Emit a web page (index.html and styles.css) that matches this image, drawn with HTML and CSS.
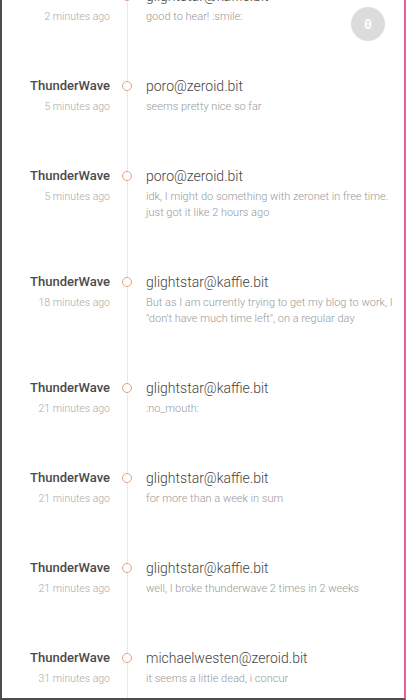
FILE: index.html
```html
<!DOCTYPE html>
<html>
<head>
<meta charset="utf-8">
<link rel="stylesheet" href="styles.css">
</head>
<body>
<div class="frame">
  <div class="feed">
    <div class="item">
      <div class="meta"><div class="name">ThunderWave</div><div class="time">2 minutes ago</div></div>
      <div class="rail"><span class="dot"></span></div>
      <div class="body"><div class="title">glightstar@kaffie.bit</div><div class="msg">good to hear! :smile:</div></div>
    </div>
    <div class="item">
      <div class="meta"><div class="name">ThunderWave</div><div class="time">5 minutes ago</div></div>
      <div class="rail"><span class="dot"></span></div>
      <div class="body"><div class="title">poro@zeroid.bit</div><div class="msg">seems pretty nice so far</div></div>
    </div>
    <div class="item">
      <div class="meta"><div class="name">ThunderWave</div><div class="time">5 minutes ago</div></div>
      <div class="rail"><span class="dot"></span></div>
      <div class="body"><div class="title">poro@zeroid.bit</div><div class="msg">idk, I might do something with zeronet in free time.<br>just got it like 2 hours ago</div></div>
    </div>
    <div class="item">
      <div class="meta"><div class="name">ThunderWave</div><div class="time">18 minutes ago</div></div>
      <div class="rail"><span class="dot"></span></div>
      <div class="body"><div class="title">glightstar@kaffie.bit</div><div class="msg">But as I am currently trying to get my blog to work, I<br>"don't have much time left", on a regular day</div></div>
    </div>
    <div class="item">
      <div class="meta"><div class="name">ThunderWave</div><div class="time">21 minutes ago</div></div>
      <div class="rail"><span class="dot"></span></div>
      <div class="body"><div class="title">glightstar@kaffie.bit</div><div class="msg">:no_mouth:</div></div>
    </div>
    <div class="item">
      <div class="meta"><div class="name">ThunderWave</div><div class="time">21 minutes ago</div></div>
      <div class="rail"><span class="dot"></span></div>
      <div class="body"><div class="title">glightstar@kaffie.bit</div><div class="msg">for more than a week in sum</div></div>
    </div>
    <div class="item">
      <div class="meta"><div class="name">ThunderWave</div><div class="time">21 minutes ago</div></div>
      <div class="rail"><span class="dot"></span></div>
      <div class="body"><div class="title">glightstar@kaffie.bit</div><div class="msg">well, I broke thunderwave 2 times in 2 weeks</div></div>
    </div>
    <div class="item">
      <div class="meta"><div class="name">ThunderWave</div><div class="time">31 minutes ago</div></div>
      <div class="rail"><span class="dot"></span></div>
      <div class="body"><div class="title">michaelwesten@zeroid.bit</div><div class="msg">it seems a little dead, i concur</div></div>
    </div>
  </div>
  <div class="badge">0</div>
</div>
</body>
</html>
```
FILE: styles.css
```css
html, body {
  margin: 0;
  padding: 0;
  background: #ffffff;
}
body {
  font-family: Roboto, "Liberation Sans", sans-serif;
}
.frame {
  position: relative;
  box-sizing: border-box;
  width: 406px;
  height: 700px;
  border-left: 2px solid #4d4d4d;
  border-right: 2px solid #e5609a;
  border-bottom: 2px solid #4d4d4d;
  overflow: hidden;
  background: #fff;
}
.feed {
  margin-top: -14px;
}
.item {
  display: grid;
  grid-template-columns: 108px 34px 1fr;
  padding-bottom: 51px;
  background: linear-gradient(#ece6e6, #ece6e6) 125px 0 / 1px 100% no-repeat;
}
.meta {
  text-align: right;
}
.name {
  font-size: 13px;
  font-weight: 500;
  color: #4a4a4a;
  line-height: 20px;
}
.time {
  font-size: 10.5px;
  font-weight: 300;
  color: #aaa;
  line-height: 16px;
  margin-top: 3px;
}
.rail {
  display: flex;
  justify-content: center;
  align-items: flex-start;
  padding-top: 5px;
}
.dot {
  box-sizing: border-box;
  width: 10px;
  height: 10px;
  border-radius: 50%;
  border: 1.5px solid #e6a07f;
  background: #fff;
}
.body {
  padding-left: 2px;
}
.title {
  font-size: 14px;
  font-weight: 300;
  color: #444;
  line-height: 20px;
}
.msg {
  font-size: 11px;
  font-weight: 300;
  color: #999;
  line-height: 16px;
  margin-top: 3px;
}
.badge {
  position: absolute;
  left: 349px;
  top: 7px;
  width: 34px;
  height: 34px;
  border-radius: 50%;
  background: #dcdcdc;
  color: #fafafa;
  font-family: "DejaVu Sans Mono", monospace;
  font-size: 14px;
  font-weight: bold;
  display: flex;
  align-items: center;
  justify-content: center;
}
```
